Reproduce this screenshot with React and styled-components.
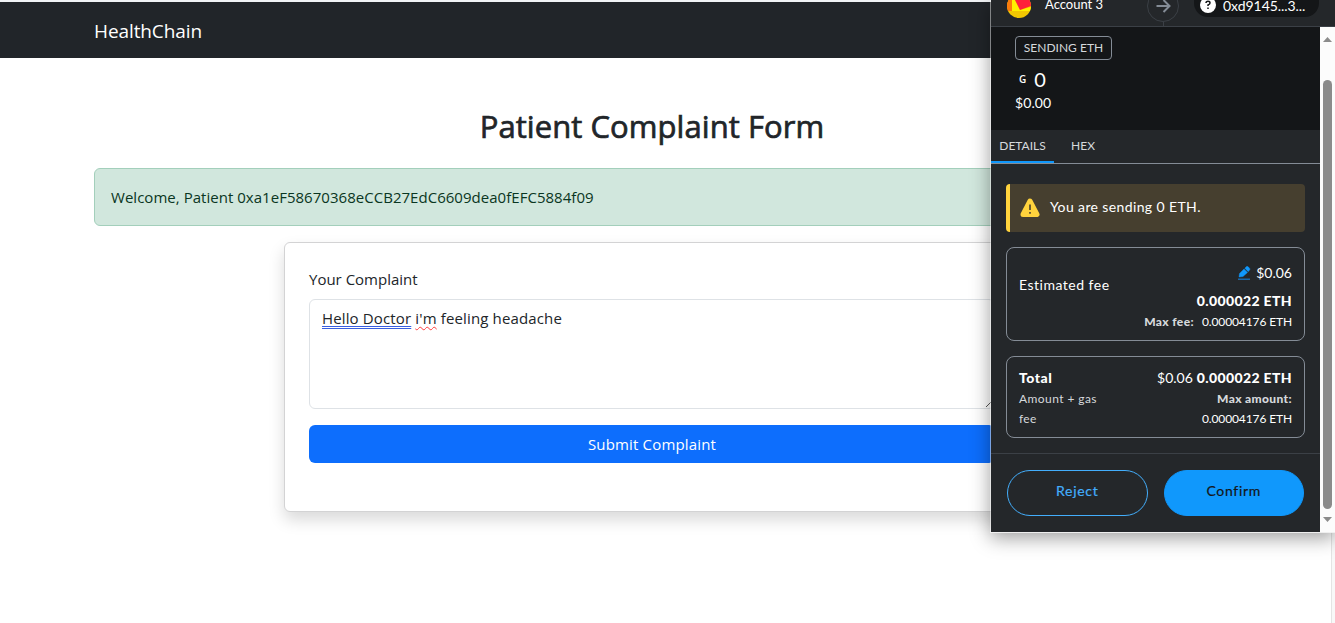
import React from "react";
import styled, { createGlobalStyle } from "styled-components";

const Global = createGlobalStyle`
  * { box-sizing: border-box; }
  html, body { margin: 0; height: 100%; overflow: hidden; background: #fff; }
  body { font-family: "Open Sans", "Noto Sans", sans-serif; font-size: 15px; color: #212529; }
`;

const Page = styled.div`
  position: relative;
  height: 623px;
  overflow: hidden;
`;

const TopEdge = styled.div`
  height: 2px;
  background: #f1f3f5;
`;

const Navbar = styled.header`
  height: 56px;
  padding: 1px 0 0 94px;
  display: flex;
  align-items: center;
  background: #212529;
`;

const Brand = styled.span`
  font-size: 19px;
  line-height: 30px;
  letter-spacing: -0.1px;
  color: #fff;
  white-space: nowrap;
`;

const Main = styled.main`
  width: 1116px;
  margin-left: 94px;
  padding-top: 49px;
  display: flex;
  flex-direction: column;
  align-items: center;
`;

const Title = styled.h2`
  margin: 0 0 23px;
  font-size: 31px;
  font-weight: 400;
  line-height: 38px;
  letter-spacing: 0.06px;
  white-space: nowrap;
  -webkit-text-stroke: 0.7px #212529;
`;

const Welcome = styled.div`
  width: 100%;
  height: 58px;
  padding: 0 16px;
  display: flex;
  align-items: center;
  border: 1px solid #a3cfbb;
  border-radius: 6px;
  background: #d1e7dd;
  color: #0a3622;
  letter-spacing: 0.03px;
  white-space: nowrap;
`;

const Card = styled.section`
  width: 736px;
  height: 270px;
  margin-top: 16px;
  padding: 24px;
  border: 1px solid #d3d3d4;
  border-radius: 6px;
  background: #fff;
  box-shadow: 0 8px 16px rgba(0, 0, 0, 0.15);
`;

const Label = styled.label`
  display: block;
  margin-bottom: 8px;
  line-height: 24px;
`;

const Field = styled.div`
  height: 110px;
  padding: 6px 12px;
  display: flex;
  align-items: flex-start;
  justify-content: space-between;
  border: 1px solid #dee2e6;
  border-radius: 6px;
  line-height: 24px;
  letter-spacing: 0.14px;
`;

const Grammar = styled.span`
  text-decoration: underline double #3a5fe0 1px;
  text-underline-offset: 2px;
  text-decoration-skip-ink: none;
`;

const Spelling = styled.span`
  text-decoration: underline wavy #ff3b3b 1.4px;
  text-underline-offset: 2px;
  text-decoration-skip-ink: none;
`;

const Submit = styled.button`
  width: 100%;
  height: 38px;
  margin-top: 16px;
  border: 0;
  border-radius: 6px;
  background: #0d6efd;
  color: #fff;
  font: inherit;
  letter-spacing: 0.17px;
`;

const PageScroll = styled.div`
  position: absolute;
  right: 0;
  top: 0;
  width: 4px;
  height: 100%;
  border-left: 1px solid #e4e4e4;
  background: #f8f8f8;
`;

const Wallet = styled.aside`
  position: absolute;
  top: 0;
  left: 990px;
  width: 345px;
  height: 533px;
  display: flex;
  flex-direction: column;
  border-left: 1px solid rgba(255, 255, 255, 0.45);
  border-bottom: 1px solid rgba(244, 244, 244, 0.9);
  background: #24272a;
  background-clip: padding-box;
  box-shadow: 0 5px 18px rgba(0, 0, 0, 0.38);
  font-family: Lato, sans-serif;
  font-size: 14px;
  color: #fff;
`;

const Accounts = styled.div`
  height: 27px;
  flex: none;
  display: flex;
  align-items: flex-start;
  overflow: hidden;
  border-bottom: 1px solid #3b4046;
`;

const Sender = styled.div`
  width: 156px;
  padding-left: 16px;
  display: flex;
  gap: 14px;
  font-size: 13px;
  line-height: 9px;
`;

const Recipient = styled.div`
  width: 125px;
  height: 17px;
  margin-left: 15px;
  padding-left: 6px;
  display: flex;
  align-items: flex-start;
  gap: 6px;
  border-radius: 0 0 14px 14px;
  background: #141618;
  line-height: 11px;
  letter-spacing: -0.05px;
`;

const Body = styled.div`
  flex: 1;
  display: flex;
`;

const Panel = styled.div`
  width: 329px;
  display: flex;
  flex-direction: column;
`;

const Scrollbar = styled.div`
  width: 15px;
  padding: 10px 3px 9px;
  display: flex;
  flex-direction: column;
  justify-content: space-between;
  background: #fcfcfc;
`;

const Thumb = styled.div`
  width: 9px;
  height: 429px;
  margin-top: 28px;
  border-radius: 5px;
  background: #8b8b8b;
`;

const Summary = styled.div`
  height: 103px;
  padding: 9px 24px 0;
  display: flex;
  flex-direction: column;
  align-items: flex-start;
  background: #141618;
`;

const Action = styled.span`
  width: 97px;
  height: 24px;
  border: 1px solid #848c96;
  border-radius: 4px;
  text-align: center;
  font-size: 12px;
  line-height: 22px;
  color: #d6d9dc;
  white-space: nowrap;
`;

const Amount = styled.div`
  height: 26px;
  margin-top: 6px;
  padding-left: 4px;
  display: flex;
  align-items: center;
  gap: 8px;
  font-size: 20px;
`;

const Symbol = styled.small`
  font: 600 10px "Open Sans", sans-serif;
`;

const Fiat = styled.div`
  margin-top: 2px;
  line-height: 18px;
  letter-spacing: 0.1px;
`;

const Tabs = styled.nav`
  height: 34px;
  display: flex;
  border-bottom: 1px solid #848c96;
`;

const Tab = styled.span`
  width: ${(p) => (p.$active ? 63 : 58)}px;
  height: 33px;
  border-bottom: ${(p) => (p.$active ? "2px solid #1098fc" : "0")};
  text-align: center;
  font-size: 12px;
  line-height: 31px;
  color: #d6d9dc;
`;

const Warning = styled.div`
  height: 48px;
  margin: 20px 15px 15px;
  padding-left: 10px;
  display: flex;
  align-items: center;
  gap: 10px;
  border-left: 4px solid #ffd33d;
  border-radius: 4px;
  background: #463f2f;
  letter-spacing: 0.38px;
`;

const WarningText = styled.span`
  padding-bottom: 3px;
`;

const FeeBox = styled.div`
  height: ${(p) => p.$height}px;
  margin: 0 15px 15px;
  padding: ${(p) => p.$top}px 12px 0;
  display: flex;
  justify-content: space-between;
  border: 1px solid #848c96;
  border-radius: 8px;
`;

const Column = styled.div`
  display: flex;
  flex-direction: column;
  align-items: ${(p) => (p.$end ? "flex-end" : "flex-start")};
  padding-top: ${(p) => p.$drop || 0}px;
`;

const Line = styled.div`
  height: ${(p) => p.$height}px;
  display: flex;
  align-items: center;
  gap: ${(p) => p.$gap || 4}px;
  font-size: ${(p) => (p.$small ? 12 : 14)}px;
  letter-spacing: ${(p) => p.$track || 0}px;
  color: ${(p) => (p.$muted ? "#d6d9dc" : "#fff")};
  white-space: nowrap;
`;

const Strong = styled.b`
  font-weight: 900;
  letter-spacing: ${(p) => p.$track ?? 0.36}px;
  color: ${(p) => (p.$muted ? "#d6d9dc" : "#fff")};
`;

const Footer = styled.footer`
  flex: 1;
  padding: 16px 16px 0;
  display: flex;
  gap: 16px;
  border-top: 1px solid #3b4046;
`;

const Pill = styled.button`
  flex: 1;
  height: 46px;
  padding: 0 0 5px;
  border: 1px solid ${(p) => (p.$primary ? "#1098fc" : "#43aefc")};
  border-radius: 23px;
  background: ${(p) => (p.$primary ? "#1098fc" : "transparent")};
  color: ${(p) => (p.$primary ? "#141618" : "#43aefc")};
  font: 400 14px Lato, sans-serif;
  letter-spacing: 0.7px;
  -webkit-text-stroke: 0.2px currentColor;
`;

const Avatar = () => (
  <svg width="24" height="18" viewBox="0 0 24 18">
    <clipPath id="face"><circle cx="12" cy="6" r="12" /></clipPath>
    <g clipPath="url(#face)">
      <rect y="-6" width="24" height="24" fill="#f2c802" />
      <path d="M0 0H7V11H0Z" fill="#fb7a0c" />
      <path d="M5 0H8L13 10L24 7V11H5Z" fill="#fff000" />
      <path d="M7 -2L24 -6V6L13 10Z" fill="#ff1f3a" />
    </g>
  </svg>
);

const Arrow = () => (
  <svg width="32" height="26" viewBox="0 0 32 26" fill="none">
    <circle cx="16" cy="6" r="15.5" stroke="#3b4046" />
    <path d="M16.5 22V26" stroke="#3b4046" />
    <path d="M9.5 6H22M16.5 0L22.5 6L16.5 12" stroke="#848c96" strokeWidth="2" />
  </svg>
);

const Question = () => (
  <svg width="17" height="14" viewBox="0 0 17 14">
    <circle cx="8" cy="5" r="8" fill="#fff" />
    <path d="M6 3Q6 1.2 8 1.2Q10 1.2 10 2.9Q10 4.1 8 4.9V6.1M8 7.5V9.1" fill="none" stroke="#141618" strokeWidth="1.5" />
  </svg>
);

const Alert = () => (
  <svg width="20" height="20" viewBox="0 0 20 20">
    <path d="M10 3L17 16.5H3Z" fill="#ffd33d" stroke="#ffd33d" strokeWidth="5" strokeLinejoin="round" />
    <path d="M10 6.5V12M10 14V15.8" stroke="#463f2f" strokeWidth="1.6" />
  </svg>
);

const Pencil = () => (
  <svg width="13" height="14" viewBox="0 0 13 14">
    <path d="M0 12.5H12V14H0Z" fill="#1b68a8" />
    <path d="M1 11L1.5 7.5L6 3L9.5 6.5L5 10.5ZM6.8 2.2L8.5.6Q9.3 0 10.2.8L11.7 2.4Q12.3 3.2 11.6 4L10.2 5.7Z" fill="#1098fc" stroke="#1098fc" strokeWidth=".4" />
  </svg>
);

const Caret = ({ down }) => (
  <svg width="9" height="6" viewBox="0 0 9 6">
    <path d={down ? "M0 0H9L4.5 5Z" : "M0 5H9L4.5 0Z"} fill="#8b8b8b" />
  </svg>
);

const Grip = styled.svg`
  align-self: flex-end;
  margin: 0 -13px -5px 0;
`;

export default function App() {
  return (
    <Page>
      <Global />
      <TopEdge />
      <Navbar><Brand>HealthChain</Brand></Navbar>
      <Main>
        <Title>Patient Complaint Form</Title>
        <Welcome><span>Welcome, Patient 0xa1eF58670368eCCB27EdC6609dea0fEFC5884f09</span></Welcome>
        <Card>
          <Label>Your Complaint</Label>
          <Field>
            <span><Grammar>Hello Doctor</Grammar> <Spelling>i'm</Spelling> feeling headache</span>
            <Grip width="9" height="9" viewBox="0 0 9 9"><path d="M0 9L9 0M5 9L9 5" stroke="#555" /></Grip>
          </Field>
          <Submit>Submit Complaint</Submit>
        </Card>
      </Main>
      <PageScroll />
      <Wallet>
        <Accounts>
          <Sender><Avatar /><span>Account 3</span></Sender>
          <Arrow />
          <Recipient><Question /><span>0xd9145...3...</span></Recipient>
        </Accounts>
        <Body>
          <Panel>
            <Summary>
              <Action>SENDING ETH</Action>
              <Amount><Symbol>G</Symbol><span>0</span></Amount>
              <Fiat>$0.00</Fiat>
            </Summary>
            <Tabs><Tab $active>DETAILS</Tab><Tab>HEX</Tab></Tabs>
            <Warning><Alert /><WarningText>You are sending 0 ETH.</WarningText></Warning>
            <FeeBox $height={94} $top={11}>
              <Column $drop={14}><Line $height={22} $track={0.5}>Estimated fee</Line></Column>
              <Column $end>
                <Line $height={27} $gap={5}><Pencil /><span>$0.06</span></Line>
                <Line $height={28}><Strong>0.000022 ETH</Strong></Line>
                <Line $height={14} $small $gap={8} $track={-0.12}><Strong $muted>Max fee:</Strong><span>0.00004176 ETH</span></Line>
              </Column>
            </FeeBox>
            <FeeBox $height={82} $top={9}>
              <Column>
                <Line $height={22}><Strong $track={0.5}>Total</Strong></Line>
                <Line $height={20} $small $muted $track={0.42}>Amount + gas</Line>
                <Line $height={20} $small $muted $track={0.3}>fee</Line>
              </Column>
              <Column $end>
                <Line $height={22}><span>$0.06</span><Strong>0.000022 ETH</Strong></Line>
                <Line $height={20} $small><Strong $muted>Max amount:</Strong></Line>
                <Line $height={20} $small $track={-0.12}>0.00004176 ETH</Line>
              </Column>
            </FeeBox>
            <Footer><Pill>Reject</Pill><Pill $primary>Confirm</Pill></Footer>
          </Panel>
          <Scrollbar><Caret /><Thumb /><Caret down /></Scrollbar>
        </Body>
      </Wallet>
    </Page>
  );
}
